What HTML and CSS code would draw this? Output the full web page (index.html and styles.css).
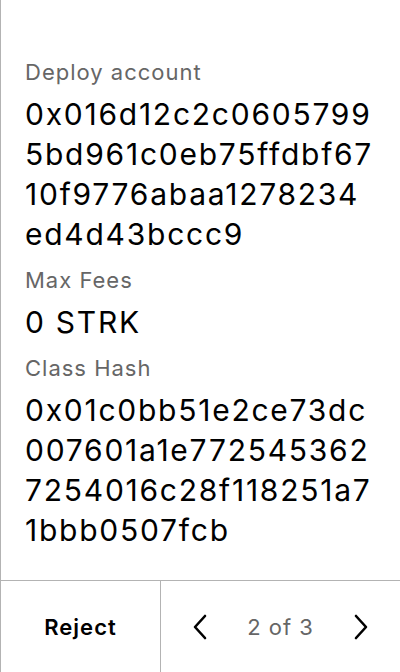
FILE: index.html
```html
<!DOCTYPE html>
<html>
<head>
<meta charset="utf-8">
<link rel="stylesheet" href="styles.css">
</head>
<body>
<div class="screen">
  <main class="content">
    <div class="field">
      <div class="label">Deploy account</div>
      <div class="value">
        <span class="line">0x016d12c2c0605799</span>
        <span class="line">5bd961c0eb75ffdbf67</span>
        <span class="line">10f9776abaa1278234</span>
        <span class="line">ed4d43bccc9</span>
      </div>
    </div>
    <div class="field">
      <div class="label">Max Fees</div>
      <div class="value"><span class="line">0 STRK</span></div>
    </div>
    <div class="field">
      <div class="label">Class Hash</div>
      <div class="value">
        <span class="line">0x01c0bb51e2ce73dc</span>
        <span class="line">007601a1e772545362</span>
        <span class="line">7254016c28f118251a7</span>
        <span class="line">1bbb0507fcb</span>
      </div>
    </div>
  </main>
  <footer class="footer">
    <div class="reject">Reject</div>
    <div class="pager">
      <svg class="chev" width="24" height="28" viewBox="0 0 24 28"><polyline points="16,3 6,14 16,25" fill="none" stroke="#000" stroke-width="2.6" stroke-linecap="round" stroke-linejoin="round"/></svg>
      <span class="page">2 of 3</span>
      <svg class="chev" width="24" height="28" viewBox="0 0 24 28"><polyline points="8,3 18,14 8,25" fill="none" stroke="#000" stroke-width="2.6" stroke-linecap="round" stroke-linejoin="round"/></svg>
    </div>
  </footer>
</div>
</body>
</html>
```
FILE: styles.css
```css
html, body {
  margin: 0;
  padding: 0;
  background: #fff;
}
body {
  font-family: Inter, "Noto Sans", sans-serif;
  color: #000;
}
.screen {
  width: 400px;
  height: 672px;
  box-sizing: border-box;
  border-left: 1px solid #b3b3b3;
  display: flex;
  flex-direction: column;
}
.content {
  flex: 1;
  padding: 58px 0 0 24px;
}
.field {
  margin-bottom: 12px;
}
.label {
  font-size: 22px;
  line-height: 28px;
  color: #666;
  letter-spacing: 1px;
  margin-bottom: 8px;
}
.value {
  font-size: 30px;
  line-height: 40px;
  letter-spacing: 1.75px;
}
.line {
  display: block;
  white-space: nowrap;
}
.footer {
  height: 92px;
  box-sizing: border-box;
  border-top: 1px solid #b3b3b3;
  display: flex;
}
.reject {
  width: 159px;
  border-right: 1px solid #b3b3b3;
  display: flex;
  align-items: center;
  justify-content: center;
  font-size: 22px;
  font-weight: 600;
  letter-spacing: 1px;
}
.pager {
  flex: 1;
  display: flex;
  align-items: center;
  justify-content: space-between;
  padding: 0 28px 0 28px;
}
.page {
  font-size: 22px;
  color: #666;
  letter-spacing: 1px;
}
.chev {
  display: block;
}
```
